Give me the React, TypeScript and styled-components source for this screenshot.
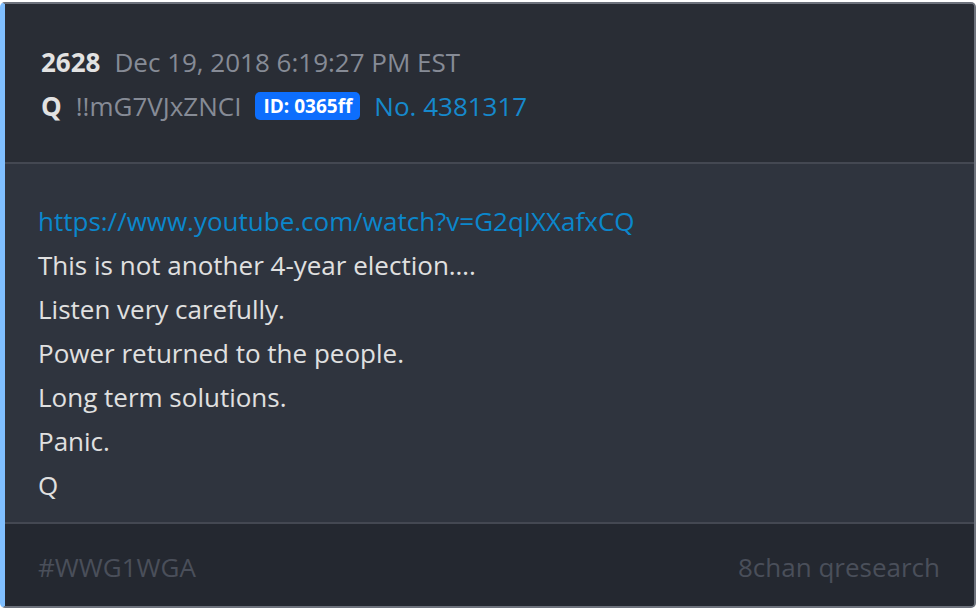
import styled, { createGlobalStyle } from 'styled-components';

const GlobalStyle = createGlobalStyle`
  html, body {
    margin: 0;
    padding: 0;
    background: #ffffff;
  }
  body {
    font-family: "Open Sans", "Noto Sans", sans-serif;
  }
`;

const Card = styled.article`
  margin: 2px 2px 2px 0;
  height: 606px;
  box-sizing: border-box;
  border: 2px solid #6d727c;
  border-left: 5px solid #80bfff;
  border-radius: 5px;
  overflow: hidden;
  display: flex;
  flex-direction: column;
  background: #2f343e;
`;

const Header = styled.header`
  background: #292d35;
  padding: 36px 36px 34px;
  border-bottom: 2px solid #444852;
`;

const MetaRow = styled.div`
  display: flex;
  align-items: center;
  gap: 14px;
  height: 44px;
  font-size: 26px;
  white-space: nowrap;
`;

const Strong = styled.span`
  font-weight: 700;
  color: #e2e2e2;
`;

const Muted = styled.span`
  color: #868b96;
`;

const Badge = styled.span`
  background: #0d6efd;
  color: #ffffff;
  font-weight: 700;
  font-size: 19px;
  line-height: 28px;
  padding: 0 8px;
  border-radius: 5px;
`;

const PostNo = styled.span`
  color: #1689cc;
`;

const Body = styled.section`
  flex: 1;
  padding: 35px 33px 13px;
  border-bottom: 2px solid #444852;
`;

const Line = styled.div<{ $link?: boolean }>`
  font-size: 26px;
  line-height: 44px;
  color: ${p => (p.$link ? '#0b87cc' : '#e0e0e0')};
`;

const Footer = styled.footer`
  background: #242830;
  height: 82px;
  box-sizing: border-box;
  padding: 4px 34px 0 33px;
  display: flex;
  align-items: center;
  justify-content: space-between;
  font-size: 26px;
  color: #4a4f5a;
`;

const lines = [
  'This is not another 4-year election….',
  'Listen very carefully.',
  'Power returned to the people.',
  'Long term solutions.',
  'Panic.',
  'Q',
];

export default function App() {
  return (
    <>
      <GlobalStyle />
      <Card>
        <Header>
          <MetaRow>
            <Strong>2628</Strong>
            <Muted>Dec 19, 2018 6:19:27 PM EST</Muted>
          </MetaRow>
          <MetaRow>
            <Strong>Q</Strong>
            <Muted>!!mG7VJxZNCI</Muted>
            <Badge>ID: 0365ff</Badge>
            <PostNo>No. 4381317</PostNo>
          </MetaRow>
        </Header>
        <Body>
          <Line $link>https://www.youtube.com/watch?v=G2qIXXafxCQ</Line>
          {lines.map(l => (
            <Line key={l}>{l}</Line>
          ))}
        </Body>
        <Footer>
          <span>#WWG1WGA</span>
          <span>8chan qresearch</span>
        </Footer>
      </Card>
    </>
  );
}
